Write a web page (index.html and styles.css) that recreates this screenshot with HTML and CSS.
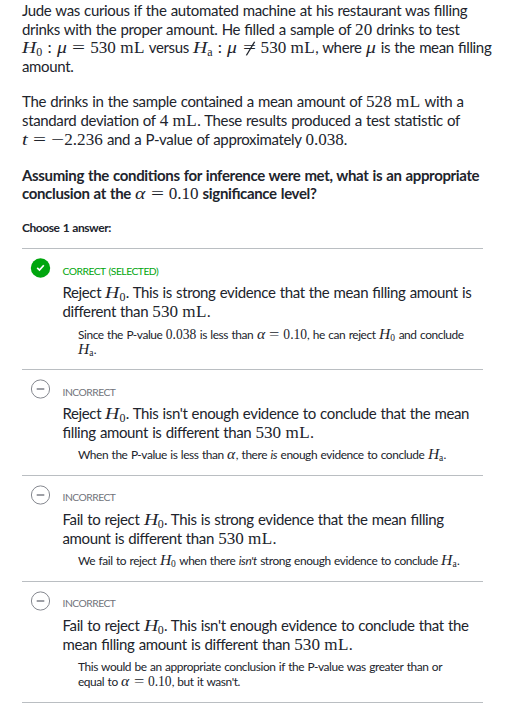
FILE: index.html
```
<!DOCTYPE html>
<html lang="en">
<head>
<meta charset="utf-8">
<title>Significance test conclusion</title>
<link rel="stylesheet" href="styles.css">
</head>
<body>
<main class="exercise">
<section class="question">
<p class="intro">Jude was curious if the automated machine at his restaurant was filling<br>drinks with the proper amount. He filled a sample of <span class="m">20</span> drinks to test<br><span class="m"><i class="h">H</i><sub class="zero">0</sub><span class="colon">:</span><i class="mu">μ</i><span class="rel">=</span>530<span class="unit">mL</span></span> versus <span class="m"><i class="h">H</i><sub>a</sub><span class="colon">:</span><i class="mu">μ</i><span class="rel ne">=</span>530<span class="unit">mL</span></span>, where <span class="m"><i class="mu">μ</i></span> is the mean filling<br>amount.</p>
<p class="results">The drinks in the sample contained a mean amount of <span class="m">528<span class="unit">mL</span></span> with a<br>standard deviation of <span class="m">4<span class="unit">mL</span></span>. These results produced a test statistic of<br><span class="m"><i class="t">t</i><span class="rel">=</span><span class="minus">−</span>2.236</span> and a P-value of approximately <span class="m">0.038</span>.</p>
<p class="prompt">Assuming the conditions for inference were met, what is an appropriate<br>conclusion at the <span class="m"><i class="alpha">α</i><span class="rel">=</span>0.10</span> significance level?</p>
</section>
<p class="choose">Choose 1 answer:</p>
<ul class="choices">
<li class="choice correct">
<svg class="icon" viewBox="0 0 20 20"><circle cx="10" cy="10" r="9.7" fill="#00a60e"/><path d="M6.7 9.8 9 12l4.3-4.8" fill="none" stroke="#fff" stroke-width="1.7"/></svg>
<div class="body"><p class="status">CORRECT (SELECTED)</p>
<p class="answer">Reject <span class="m"><i class="h">H</i><sub class="zero">0</sub></span>. This is strong evidence that the mean filling amount is<br>different than <span class="m">530<span class="unit">mL</span></span>.</p>
<p class="why">Since the P-value <span class="m">0.038</span> is less than <span class="m"><i class="alpha">α</i><span class="rel">=</span>0.10</span>, he can reject <span class="m"><i class="h">H</i><sub class="zero">0</sub></span> and conclude<br><span class="m"><i class="h">H</i><sub>a</sub></span>.</p></div>
</li>
<li class="choice second">
<svg class="icon" viewBox="0 0 20 20"><circle cx="10" cy="10" r="9.1" fill="none" stroke="#85888f"/><path d="M6.2 10h7.6" stroke="#85888f" stroke-width="1.6"/></svg>
<div class="body"><p class="status">INCORRECT</p>
<p class="answer">Reject <span class="m"><i class="h">H</i><sub class="zero">0</sub></span>. This isn't enough evidence to conclude that the mean<br>filling amount is different than <span class="m">530<span class="unit">mL</span></span>.</p>
<p class="why">When the P-value is less than <span class="m"><i class="alpha">α</i></span>, there <em>is</em> enough evidence to conclude <span class="m"><i class="h">H</i><sub>a</sub></span>.</p></div>
</li>
<li class="choice third">
<svg class="icon" viewBox="0 0 20 20"><circle cx="10" cy="10" r="9.1" fill="none" stroke="#85888f"/><path d="M6.2 10h7.6" stroke="#85888f" stroke-width="1.6"/></svg>
<div class="body"><p class="status">INCORRECT</p>
<p class="answer">Fail to reject <span class="m"><i class="h">H</i><sub class="zero">0</sub></span>. This is strong evidence that the mean filling<br>amount is different than <span class="m">530<span class="unit">mL</span></span>.</p>
<p class="why">We fail to reject <span class="m"><i class="h">H</i><sub class="zero">0</sub></span> when there <em>isn't</em> strong enough evidence to conclude <span class="m"><i class="h">H</i><sub>a</sub></span>.</p></div>
</li>
<li class="choice fourth">
<svg class="icon" viewBox="0 0 20 20"><circle cx="10" cy="10" r="9.1" fill="none" stroke="#85888f"/><path d="M6.2 10h7.6" stroke="#85888f" stroke-width="1.6"/></svg>
<div class="body"><p class="status">INCORRECT</p>
<p class="answer">Fail to reject <span class="m"><i class="h">H</i><sub class="zero">0</sub></span>. This isn't enough evidence to conclude that the<br>mean filling amount is different than <span class="m">530<span class="unit">mL</span></span>.</p>
<p class="why">This would be an appropriate conclusion if the P-value was greater than or<br>equal to <span class="m"><i class="alpha">α</i><span class="rel">=</span>0.10</span>, but it wasn't.</p></div>
</li>
</ul>
</main>
</body>
</html>
```
FILE: styles.css
```
* { box-sizing: border-box; }
body { margin: 0; background: #fff; color: #21242c; font-family: Lato, sans-serif; font-feature-settings: "liga" 1; }
p { margin: 0; white-space: nowrap; }
.exercise { padding-left: 22px; width: 510px; height: 722px; overflow: hidden; }
.question { font-size: 15px; line-height: 18.6px; padding-top: 1px; letter-spacing: -.35px; word-spacing: .7px; }
.results { margin-top: 17px; }
.prompt { margin-top: 18px; font-weight: 700; line-height: 18px; }
.choose { margin-top: 18px; font-size: 12px; line-height: 16px; font-weight: 700; letter-spacing: -.45px; word-spacing: .7px; }
.choices { list-style: none; margin: 12px 0 0; padding: 0; width: 461px; border-top: 1px solid #babec2; }
.choice { display: flex; border-bottom: 1px solid #babec2; padding: 9px 0 0 8px; height: 106px; }
.correct { height: 121px; }
.fourth { height: 121px; }
.icon { flex: none; width: 21px; height: 20px; }
.body { padding: 6px 0 0 11.5px; }
.status { font-size: 10.3px; line-height: 14px; color: #71747b; letter-spacing: -.49px; word-spacing: 1px; }
.correct .status { color: #00a60e; }
.answer { font-size: 15px; line-height: 18.5px; margin-top: 5px; letter-spacing: -.37px; word-spacing: .7px; }
.third .body, .fourth .body { padding-top: 5px; }
.third .answer, .fourth .answer { margin-top: 6px; }
.why { font-size: 11.9px; line-height: 15px; margin: 6px 0 0 15.5px; letter-spacing: -.42px; word-spacing: .8px; }
.correct .why { margin-top: 7px; }
.m { font-family: "Liberation Serif", serif; font-size: 1.14em; font-weight: 400; line-height: 0; letter-spacing: 0; word-spacing: 0; }
.h, .mu, .rel, .minus, .alpha, .t { display: inline-block; transform-origin: left; line-height: 1; }
.h { width: .83em; transform: scaleX(1.15); }
.m sub { font-size: .7em; vertical-align: -.2em; line-height: 0; margin-right: .02em; }
.mu { width: .63em; transform: scaleX(1.15); }
.alpha { width: .64em; transform: scaleX(1.15); }
.t { width: .361em; transform: scaleX(1.2); }
.rel { width: .778em; margin: 0 .278em; transform: scaleX(1.35); }
.minus { width: .778em; transform: scaleX(1.35); }
.colon { margin: 0 .278em; }
.ne { position: relative; }
.ne::after { content: ""; position: absolute; left: .27em; top: .12em; width: .05em; height: .9em; background: currentColor; transform: rotate(24deg); }
.unit { margin-left: .25em; letter-spacing: .03em; }
```
